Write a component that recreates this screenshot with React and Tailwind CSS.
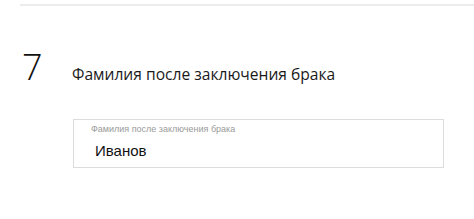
import React from "react";

export default function App() {
  return (
    <div className="w-[474px] h-[219px] bg-white overflow-hidden">
      <div className="pt-[4px] pl-[20px]">
        <div className="h-[2px] bg-[#ececec]" />
      </div>
      <div className="flex items-start pl-[22px] pt-[41px]">
        <div className="w-[50px] text-[36px] leading-[40px] font-light text-[#111] font-['Open_Sans',sans-serif]">7</div>
        <div className="pt-[17px] text-[15.6px] leading-[20px] text-[#1a1a1a] font-['Open_Sans',sans-serif]">
          Фамилия после заключения брака
        </div>
      </div>
      <div className="ml-[73px] mt-[32px] w-[371px] h-[49px] border border-[#dcdcdc] pl-[17px] pt-[4px]">
        <div className="text-[9px] leading-[10px] text-[#9a9a9a] font-['Liberation_Sans',sans-serif]">
          Фамилия после заключения брака
        </div>
        <div className="mt-[8px] pl-[4px] text-[15px] leading-[18px] text-[#111] font-['Liberation_Sans',sans-serif]">
          Иванов
        </div>
      </div>
    </div>
  );
}
